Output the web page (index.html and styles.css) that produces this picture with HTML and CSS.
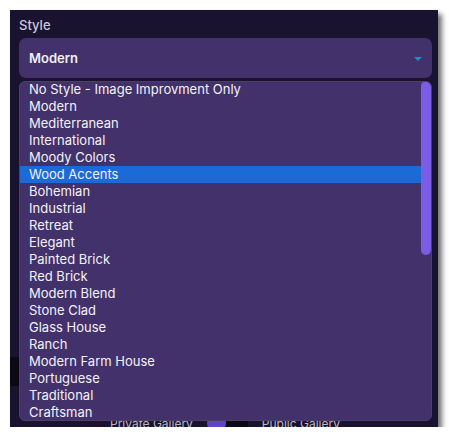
FILE: index.html
```html
<!DOCTYPE html>
<html lang="en">
  <head>
    <meta charset="UTF-8" />
    <meta name="viewport" content="width=device-width, initial-scale=1.0" />
    <title>Style</title>
    <link rel="stylesheet" href="styles.css">
  </head>
  <body>
    <div class="panel">
      <div class="field-label">Style</div>
      <div class="select">
        <span class="select-value">Modern</span>
        <span class="caret"></span>
      </div>
      <div class="spacer"></div>
      <div class="dark-band"></div>
      <div class="spacer-small"></div>
      <div class="gallery-row">
        <span class="gallery-text">Private Gallery</span>
        <span class="toggle"><span class="toggle-knob"></span></span>
        <span class="gallery-text">Public Gallery</span>
      </div>

      <div class="dropdown">
        <ul class="options">
          <li>No Style - Image Improvment Only</li>
          <li>Modern</li>
          <li>Mediterranean</li>
          <li>International</li>
          <li>Moody Colors</li>
          <li class="active">Wood Accents</li>
          <li>Bohemian</li>
          <li>Industrial</li>
          <li>Retreat</li>
          <li>Elegant</li>
          <li>Painted Brick</li>
          <li>Red Brick</li>
          <li>Modern Blend</li>
          <li>Stone Clad</li>
          <li>Glass House</li>
          <li>Ranch</li>
          <li>Modern Farm House</li>
          <li>Portuguese</li>
          <li>Traditional</li>
          <li>Craftsman</li>
        </ul>
        <div class="scroll-thumb"></div>
      </div>
    </div>
  </body>
</html>
```

FILE: styles.css
```css
body {
  margin: 0;
  padding: 0;
  background-color: #ffffff;
  font-family: Inter, "Noto Sans", sans-serif;
}
.panel {
  position: relative;
  box-sizing: border-box;
  margin: 10px 0 0 10px;
  width: 428px;
  height: 417px;
  padding: 7px 6px 0 9px;
  background-color: #1a1330;
  box-shadow: 4px 4px 5px rgba(0, 0, 0, 0.55);
  display: flex;
  flex-direction: column;
  overflow: hidden;
}
.field-label {
  font-size: 13px;
  font-weight: 500;
  line-height: 16px;
  color: #c9c5d6;
  margin-bottom: 5px;
}
.select {
  height: 40px;
  box-sizing: border-box;
  padding: 0 10px 0 10px;
  background-color: #42316a;
  border-radius: 7px;
  display: flex;
  align-items: center;
  justify-content: space-between;
}
.select-value {
  font-size: 13px;
  font-weight: 600;
  color: #f2f0f7;
}
.caret {
  width: 0;
  height: 0;
  border-left: 4px solid transparent;
  border-right: 4px solid transparent;
  border-top: 4px solid #1b8ec6;
  margin-top: 2px;
}
.spacer {
  height: 279px;
}
.dark-band {
  height: 29px;
  margin-left: -9px;
  margin-right: 6px;
  background-color: #0b0913;
}
.spacer-small {
  flex: 1;
}
.gallery-row {
  display: flex;
  align-items: center;
  height: 18px;
  margin-bottom: -5px;
  padding-left: 91px;
}
.gallery-text {
  font-size: 12px;
  color: #b9b6c4;
}
.toggle {
  display: inline-block;
  width: 41px;
  height: 18px;
  margin: 0 14px;
  background-color: #0b0913;
  border-radius: 9px;
}
.toggle-knob {
  display: block;
  width: 19px;
  height: 18px;
  background-color: #6146c4;
  border-radius: 9px;
}
.dropdown {
  position: absolute;
  top: 71px;
  left: 9px;
  width: 413px;
  height: 340px;
  box-sizing: border-box;
  background-color: #42316a;
  border: 1px solid #4d4066;
  border-radius: 6px;
  overflow: hidden;
}
.options {
  list-style: none;
  margin: -1px 0 0 -1px;
  padding: 0;
  width: 402px;
}
.options li {
  height: 17px;
  line-height: 17px;
  padding-left: 10px;
  font-size: 13px;
  color: #f3f1f8;
  white-space: nowrap;
}
.options li.active {
  background-color: #1b6ad6;
}
.scroll-thumb {
  position: absolute;
  top: -1px;
  right: 0;
  width: 10px;
  height: 174px;
  background-color: #7b5ce6;
  border-radius: 5px;
}
```
